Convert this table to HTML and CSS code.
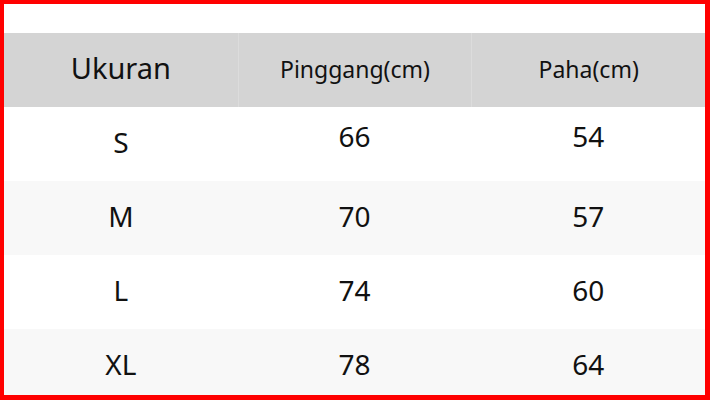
FILE: index.html
```html
<!DOCTYPE html>
<html>
<head>
<meta charset="utf-8">
<link rel="stylesheet" href="styles.css">
</head>
<body>
<div class="frame">
  <div class="table">
    <div class="row head">
      <div class="cell title">Ukuran</div>
      <div class="cell sub">Pinggang(cm)</div>
      <div class="cell sub">Paha(cm)</div>
    </div>
    <div class="row">
      <div class="cell size">S</div>
      <div class="cell num raised">66</div>
      <div class="cell num raised">54</div>
    </div>
    <div class="row alt">
      <div class="cell size">M</div>
      <div class="cell num">70</div>
      <div class="cell num">57</div>
    </div>
    <div class="row">
      <div class="cell size">L</div>
      <div class="cell num">74</div>
      <div class="cell num">60</div>
    </div>
    <div class="row alt">
      <div class="cell size">XL</div>
      <div class="cell num">78</div>
      <div class="cell num">64</div>
    </div>
  </div>
</div>
</body>
</html>
```
FILE: styles.css
```css
* { box-sizing: border-box; }
html, body { margin: 0; padding: 0; background: #fff; }
.frame {
  width: 710px;
  height: 400px;
  border-style: solid;
  border-color: #ff0000;
  border-width: 4px 5px 5px 4px;
  overflow: hidden;
  background: #fff;
  padding-top: 29px;
  font-family: "Noto Sans", "Open Sans", sans-serif;
  color: #111;
}
.table { display: flex; flex-direction: column; }
.row {
  display: grid;
  grid-template-columns: 1fr 1fr 1fr;
  height: 74px;
  flex: none;
  background: #fff;
}
.row.alt { background: #f8f8f8; }
.row.head { background: #d4d4d4; }
.cell {
  display: flex;
  align-items: center;
  justify-content: center;
  line-height: 1;
}
.head .cell + .cell { border-left: 1px solid #dcdcdc; }
.title { font-size: 29px; padding-bottom: 5px; }
.sub { font-size: 23px; padding-bottom: 2px; }
.size { font-size: 28px; padding-bottom: 4px; }
.num { font-size: 28px; padding-bottom: 4px; }
.num.raised { padding-bottom: 17px; }
```
